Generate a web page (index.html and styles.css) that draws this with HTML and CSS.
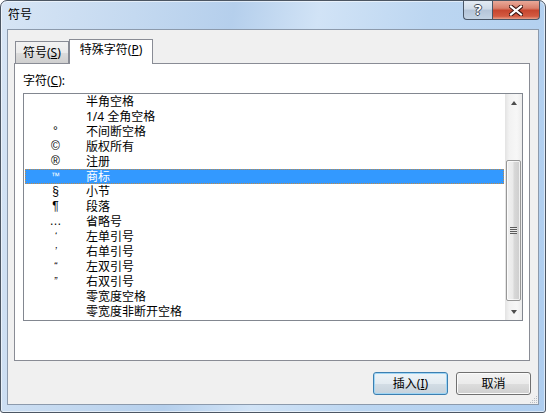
FILE: index.html
```html
<!DOCTYPE html>
<html lang="zh-CN">
<head>
    <meta charset="UTF-8">
    <title>符号</title>
    <link rel="stylesheet" href="styles.css">
</head>
<body>
<div class="window">
    <div class="titlebar">
        <span class="title">符号</span>
        <div class="caption-buttons">
            <div class="cap-btn help">?</div>
            <div class="cap-btn close">
                <svg width="14" height="11" viewBox="0 0 14 11">
                    <path d="M2 1.5 L12 9.5 M12 1.5 L2 9.5" stroke="#3a1410" stroke-width="4.2" stroke-linecap="square"/>
                    <path d="M2 1.5 L12 9.5 M12 1.5 L2 9.5" stroke="#fff" stroke-width="2.2" stroke-linecap="square"/>
                </svg>
            </div>
        </div>
    </div>

    <div class="client">
        <div class="tabs">
            <div class="tab">符号(<u>S</u>)</div>
            <div class="tab active">特殊字符(<u>P</u>)</div>
        </div>

        <div class="panel">
            <div class="label">字符(<u>C</u>):</div>
            <div class="listbox">
                <ul class="rows">
                    <li><span class="sym"></span><span class="name">半角空格</span></li>
                    <li><span class="sym"></span><span class="name">1/4 全角空格</span></li>
                    <li><span class="sym">°</span><span class="name">不间断空格</span></li>
                    <li><span class="sym">©</span><span class="name">版权所有</span></li>
                    <li><span class="sym">®</span><span class="name">注册</span></li>
                    <li class="selected"><span class="sym tm">™</span><span class="name">商标</span></li>
                    <li><span class="sym">§</span><span class="name">小节</span></li>
                    <li><span class="sym">¶</span><span class="name">段落</span></li>
                    <li><span class="sym">…</span><span class="name">省略号</span></li>
                    <li><span class="sym quote">‘</span><span class="name">左单引号</span></li>
                    <li><span class="sym quote">’</span><span class="name">右单引号</span></li>
                    <li><span class="sym quote">“</span><span class="name">左双引号</span></li>
                    <li><span class="sym quote">”</span><span class="name">右双引号</span></li>
                    <li><span class="sym"></span><span class="name">零宽度空格</span></li>
                    <li><span class="sym"></span><span class="name">零宽度非断开空格</span></li>
                </ul>
                <div class="scrollbar">
                    <div class="arrow up"></div>
                    <div class="track-top"></div>
                    <div class="thumb"><span class="grip-lines"></span></div>
                    <div class="track-bottom"></div>
                    <div class="arrow down"></div>
                </div>
            </div>
        </div>

        <div class="buttons">
            <button class="btn default">插入(<u>I</u>)</button>
            <button class="btn">取消</button>
        </div>

        <!-- size grip in the corner -->
        <svg class="size-grip" width="10" height="10" viewBox="0 0 10 10">
            <g fill="#b7bcc4">
                <rect x="8" y="2" width="1" height="1"/>
                <rect x="6" y="4" width="1" height="1"/>
                <rect x="8" y="4" width="1" height="1"/>
                <rect x="4" y="6" width="1" height="1"/>
                <rect x="6" y="6" width="1" height="1"/>
                <rect x="8" y="6" width="1" height="1"/>
                <rect x="2" y="8" width="1" height="1"/>
                <rect x="4" y="8" width="1" height="1"/>
                <rect x="6" y="8" width="1" height="1"/>
                <rect x="8" y="8" width="1" height="1"/>
            </g>
        </svg>
    </div>
</div>
</body>
</html>
```

FILE: styles.css
```css
html, body {
    margin: 0;
    padding: 0;
}

body {
    font-family: "Noto Sans", "Noto Sans CJK SC", sans-serif;
    font-size: 12px;
    color: #000;
    background: #fff;
}

ul, li {
    margin: 0;
    padding: 0;
    list-style: none;
}

u {
    text-decoration: underline;
    text-underline-offset: 1px;
}

.window {
    width: 546px;
    height: 413px;
    box-sizing: border-box;
    border: 1px solid #4c5663;
    border-radius: 7px 7px 3px 3px;
    background: linear-gradient(100deg, #d7e5f5 0%, #c4d9f0 22%, #b5cfec 38%, #d1e3f6 52%, #bcd6f1 70%, #aecdef 100%);
    box-shadow: inset 0 0 0 1px rgba(255, 255, 255, 0.55);
    display: flex;
    flex-direction: column;
    overflow: hidden;
}

.titlebar {
    height: 28px;
    display: flex;
    align-items: flex-start;
    padding-left: 7px;
}

.title {
    margin-top: 6px;
    line-height: 16px;
    font-size: 12px;
}

.caption-buttons {
    margin-left: auto;
    margin-right: 5px;
    display: flex;
}

.cap-btn {
    height: 19px;
    box-sizing: border-box;
    border: 1px solid #4a5666;
    border-top: none;
    display: flex;
    align-items: center;
    justify-content: center;
}

.help {
    width: 29px;
    border-right: none;
    border-radius: 0 0 0 4px;
    background: linear-gradient(#e3ebf4 0%, #cfdbe8 45%, #b5c5d8 50%, #c3d3e4 100%);
    color: #fff;
    font-weight: bold;
    font-size: 14px;
    line-height: 16px;
    text-shadow: 1px 0 0 #3f4a58, -1px 0 0 #3f4a58, 0 1px 0 #3f4a58, 0 -1px 0 #3f4a58;
}

.close {
    width: 48px;
    border-radius: 0 0 4px 0;
    background: linear-gradient(#e9a999 0%, #d9806c 40%, #c7462f 52%, #d35a41 85%, #e8a18b 100%);
}

.client {
    flex: 1;
    margin: 0 6px 7px 6px;
    border: 1px solid #8c9aac;
    background: #f0f0f0;
    display: flex;
    flex-direction: column;
    position: relative;
}

.tabs {
    height: 24px;
    margin: 9px 0 0 7px;
    display: flex;
    align-items: flex-end;
}

.tab {
    height: 22px;
    box-sizing: border-box;
    padding: 0 7px;
    border: 1px solid #898c95;
    border-bottom: none;
    line-height: 21px;
    background: linear-gradient(#f2f2f2 0%, #ebebeb 50%, #dddddd 51%, #cfcfcf 100%);
}

.tab.active {
    height: 25px;
    margin-bottom: -1px;
    padding: 0 10px;
    line-height: 19px;
    background: #fff;
    position: relative;
    z-index: 1;
}

.panel {
    height: 298px;
    box-sizing: border-box;
    margin: 0 8px 0 6px;
    padding: 0 6px 0 8px;
    border: 1px solid #898c95;
    background: #fff;
}

.label {
    margin-top: 9px;
    line-height: 16px;
}

.listbox {
    width: 500px;
    height: 228px;
    box-sizing: border-box;
    margin-top: 4px;
    border: 1px solid #828790;
    display: flex;
}

.rows {
    flex: 1;
}

.rows li {
    height: 15px;
    line-height: 15px;
    margin: 0 1px;
    display: flex;
    white-space: nowrap;
}

.sym {
    width: 61px;
    text-align: center;
    font-family: "Liberation Sans", sans-serif;
    font-size: 12px;
}

.sym.tm {
    font-size: 9px;
}

.sym.quote {
    font-style: italic;
    font-size: 10px;
}

.rows li.selected {
    background: #3399ff;
    color: #fff;
    outline: 1px dotted #c08a48;
    outline-offset: -1px;
}

.scrollbar {
    width: 17px;
    display: flex;
    flex-direction: column;
    background: linear-gradient(to right, #e3e3e3 0%, #f2f2f2 25%, #f7f7f7 70%, #ececec 100%);
}

.arrow {
    height: 17px;
    display: flex;
    align-items: center;
    justify-content: center;
}

.arrow::before {
    content: "";
    width: 0;
    height: 0;
    border-left: 3.5px solid transparent;
    border-right: 3.5px solid transparent;
}

.arrow.up::before {
    border-bottom: 4px solid #4d4d4d;
}

.arrow.down::before {
    border-top: 4px solid #4d4d4d;
}

.track-top {
    height: 49px;
}

.track-bottom {
    flex: 1;
}

.thumb {
    height: 141px;
    box-sizing: border-box;
    margin: 0 1px;
    border: 1px solid #979797;
    border-radius: 2px;
    background: linear-gradient(to right, #f1f1f1 0%, #eaeaea 45%, #d8d8d8 55%, #cdcdcd 100%);
    box-shadow: inset 0 0 0 1px rgba(255, 255, 255, 0.7);
    display: flex;
    align-items: center;
    justify-content: center;
}

.grip-lines {
    width: 7px;
    height: 7px;
    background: repeating-linear-gradient(#5b5b5b 0, #5b5b5b 1px, #e8e8e8 1px, #e8e8e8 2px);
}

.buttons {
    margin: 11px 7px 0 0;
    display: flex;
    justify-content: flex-end;
    gap: 8px;
}

.btn {
    width: 75px;
    height: 23px;
    box-sizing: border-box;
    padding: 0;
    border: 1px solid #707070;
    border-radius: 3px;
    font-family: "Noto Sans", "Noto Sans CJK SC", sans-serif;
    font-size: 12px;
    line-height: 20px;
    color: #000;
    background: linear-gradient(#f2f2f2 0%, #ebebeb 50%, #dddddd 51%, #cfcfcf 100%);
    box-shadow: inset 0 0 0 1px #fbfbfb;
}

.btn.default {
    border-color: #3c7fb1;
    background: linear-gradient(#eef4f8 0%, #e3ebf1 50%, #d3dde5 51%, #c6d2dc 100%);
    box-shadow: inset 0 0 0 1px #9fd5f4;
}

.size-grip {
    position: absolute;
    right: 0;
    bottom: 0;
}
```
